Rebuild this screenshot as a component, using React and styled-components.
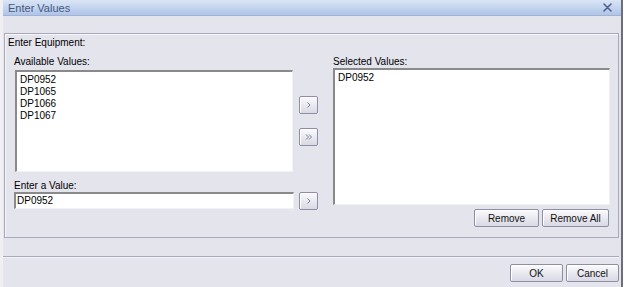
import React from 'react';
import styled, { createGlobalStyle } from 'styled-components';

const GlobalStyle = createGlobalStyle`
    html, body {
        margin: 0;
        padding: 0;
        background: #ffffff;
    }
    body {
        font-family: "Liberation Sans", Arial, sans-serif;
        font-size: 10px;
        color: #000;
    }
`

const Dialog = styled.div`
    width: 624px;
    height: 287px;
    box-sizing: border-box;
    background: #e4e4ed;
    border-left: 3px solid #f0f0f4;
    border-right: 1px solid #ffffff;
    box-shadow: inset -2px 0 0 #6e6e78;
    display: flex;
    flex-direction: column;
    overflow: hidden;
`
const TitleBar = styled.div`
    height: 16px;
    margin-right: 2px;
    background: linear-gradient(#dae5f5, #afc4e7);
    border-bottom: 1px solid #9fb3d6;
    box-sizing: border-box;
    display: flex;
    align-items: center;
    justify-content: space-between;
    padding: 0 9px 0 5px;
    color: #44587e;
    font-size: 11px;
`
const Panel = styled.div`
    margin: 17px 4px 0 1px;
    height: 205px;
    box-sizing: border-box;
    border: 1px solid #a9a9bb;
    box-shadow: inset 1px 1px 0 #f6f6fa;
    padding: 3px 0 0 3px;
`
const Legend = styled.div`
    height: 12px;
    line-height: 12px;
`
const Columns = styled.div`
    display: flex;
    margin: 7px 0 0 6px;
`
const LeftArea = styled.div`
    display: grid;
    grid-template-columns: 280px 19px;
    grid-template-rows: 12px 104px 20px 18px;
    column-gap: 5px;
`
const Label = styled.div`
    height: 12px;
    line-height: 12px;
    align-self: ${p => (p.$bottom ? 'end' : 'start')};
`
const ListBox = styled.div`
    box-sizing: border-box;
    width: ${p => p.$w}px;
    height: ${p => p.$h}px;
    margin: ${p => p.$m || '0'};
    background: #fff;
    border-top: 2px solid #8a8a8a;
    border-left: 2px solid #8a8a8a;
    border-right: 1px solid #f2f2f6;
    border-bottom: 1px solid #f2f2f6;
    padding: 2px 0 0 3px;
`
const Item = styled.div`
    height: 12px;
    line-height: 12px;
`
const Arrows = styled.div`
    display: flex;
    flex-direction: column;
    gap: 14px;
    padding-top: 28px;
`
const Input = styled.div`
    box-sizing: border-box;
    height: 17px;
    background: #fff;
    border-top: 2px solid #8a8a8a;
    border-left: 2px solid #8a8a8a;
    border-right: 1px solid #f2f2f6;
    border-bottom: 1px solid #f2f2f6;
    padding: 0 0 0 1px;
    line-height: 14px;
`
const Button = styled.button`
    box-sizing: border-box;
    width: ${p => p.$w}px;
    height: 18px;
    padding: 0;
    margin: 0;
    border: 1px solid #8d8ea6;
    border-radius: 2px;
    background: linear-gradient(#fbfbfd, #e7e7ef 55%, #d9d9e4);
    box-shadow: inset 1px 1px 0 #ffffff;
    font-family: "Liberation Sans", Arial, sans-serif;
    font-size: 10px;
    color: #111;
    display: flex;
    align-items: center;
    justify-content: center;
`
const RightColumn = styled.div`
    display: flex;
    flex-direction: column;
    margin-left: 15px;
    width: 277px;
`
const ButtonRow = styled.div`
    display: flex;
    justify-content: flex-end;
    gap: 3px;
    margin: 4px 1px 0 0;
`
const Separator = styled.div`
    margin: 18px 4px 0 -3px;
    border-top: 1px solid #a9a9bb;
    background: #f4f4f8;
    height: 1px;
`
const Footer = styled.div`
    display: flex;
    justify-content: flex-end;
    gap: 3px;
    margin: 6px 4px 0 0;
`

function CloseIcon() {
    return (
        <svg width="9" height="9" viewBox="0 0 9 9">
            <path d="M1 1L8 8M8 1L1 8" stroke="#4f628c" strokeWidth="1.6" strokeLinecap="round" />
        </svg>
    )
}

function Chevron({ double }) {
    return (
        <svg width="9" height="8" viewBox="0 0 9 8">
            {double ? (
                <path d="M2 1.5L4.5 4L2 6.5M5 1.5L7.5 4L5 6.5" fill="none" stroke="#7b7d98" strokeWidth="1" />
            ) : (
                <path d="M3.5 1.5L6 4L3.5 6.5" fill="none" stroke="#7b7d98" strokeWidth="1" />
            )}
        </svg>
    )
}

function App() {
    const available = ['DP0952', 'DP1065', 'DP1066', 'DP1067'];
    const selected = ['DP0952'];

    return (
        <>
            <GlobalStyle />
            <Dialog>
                <TitleBar>
                    <span>Enter Values</span>
                    <CloseIcon />
                </TitleBar>
                <Panel>
                    <Legend>Enter Equipment:</Legend>
                    <Columns>
                        <LeftArea>
                            <Label>Available Values:</Label>
                            <div />
                            <ListBox $w={278} $h={102} $m="2px 0 0 1px">
                                {available.map(v => <Item key={v}>{v}</Item>)}
                            </ListBox>
                            <Arrows>
                                <Button $w={19}><Chevron /></Button>
                                <Button $w={19}><Chevron double /></Button>
                            </Arrows>
                            <Label $bottom>Enter a Value:</Label>
                            <div />
                            <Input>DP0952</Input>
                            <Button $w={19}><Chevron /></Button>
                        </LeftArea>
                        <RightColumn>
                            <Label>Selected Values:</Label>
                            <ListBox $w={277} $h={137}>
                                {selected.map(v => <Item key={v}>{v}</Item>)}
                            </ListBox>
                            <ButtonRow>
                                <Button $w={65}>Remove</Button>
                                <Button $w={67}>Remove All</Button>
                            </ButtonRow>
                        </RightColumn>
                    </Columns>
                </Panel>
                <Separator />
                <Footer>
                    <Button $w={53}>OK</Button>
                    <Button $w={53}>Cancel</Button>
                </Footer>
            </Dialog>
        </>
    )
}

export default App
